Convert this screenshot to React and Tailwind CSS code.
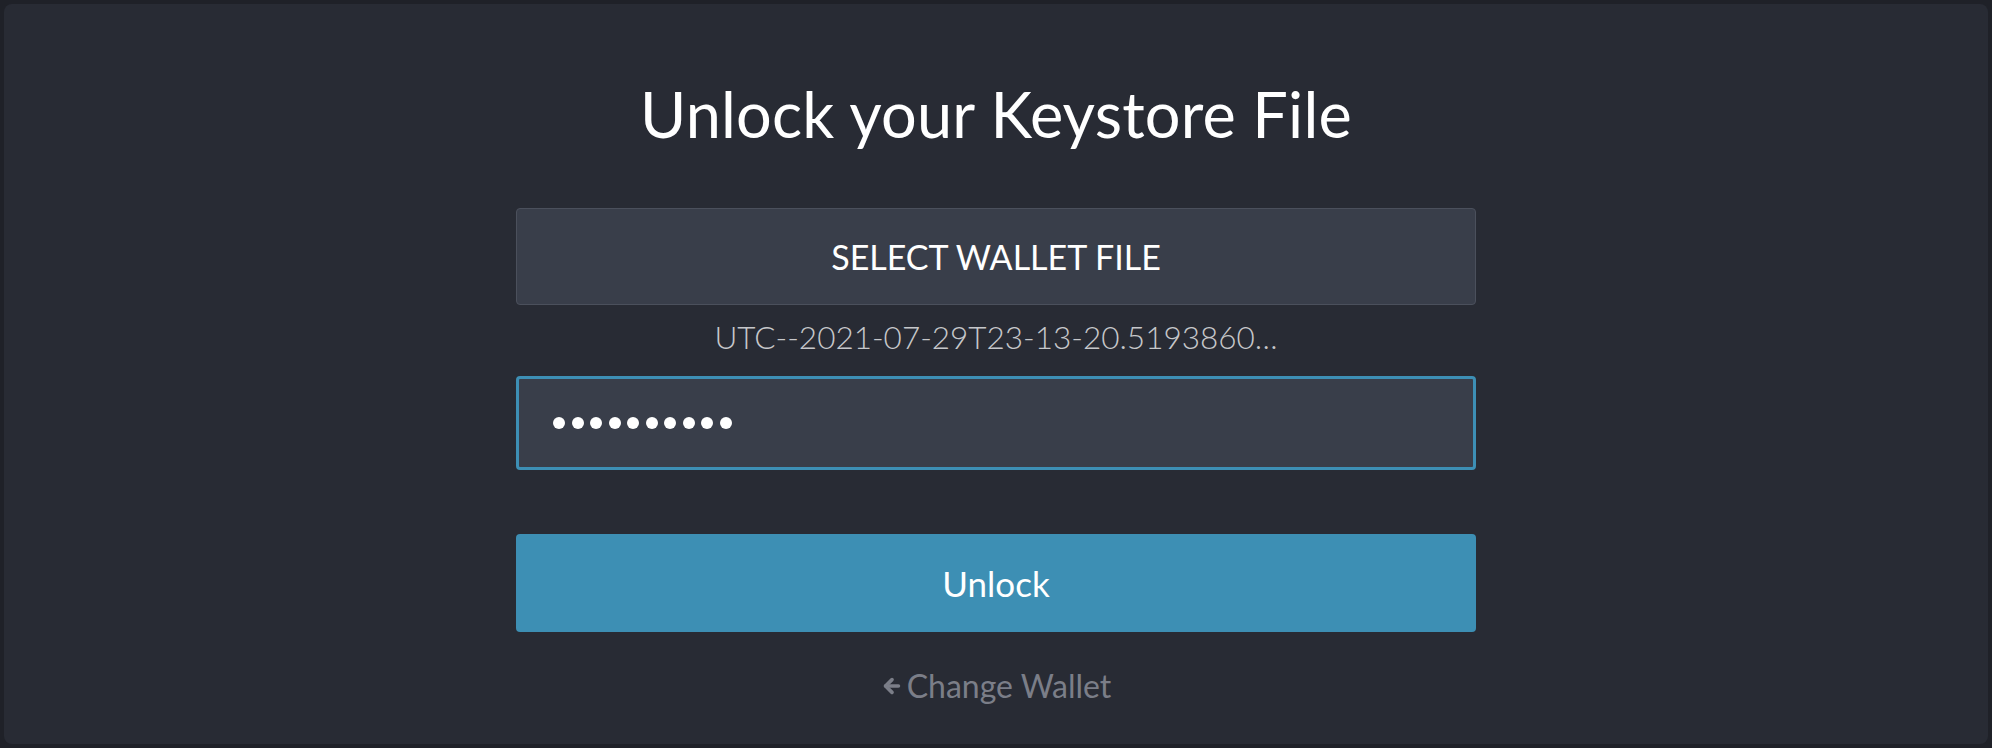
import { ArrowLeft } from "lucide-react";

const font = { fontFamily: "Lato, 'Open Sans', sans-serif" };

export default function App() {
  const dots = Array.from({ length: 10 });

  return (
    <div className="w-full h-[748px] bg-[#1f2128] p-1" style={font}>
      <div className="h-full w-full rounded-lg bg-[#282b34] flex flex-col items-center">
        {/* Title */}
        <h1 className="mt-[78px] text-[63px] leading-none text-white font-normal tracking-[0.2px]">
          Unlock your Keystore File
        </h1>

        {/* Select wallet file */}
        <button className="mt-[63px] w-[960px] h-[97px] rounded-[4px] border border-[#4b505c] bg-[#393e4a] text-white text-[34px] leading-none">
          SELECT WALLET FILE
        </button>

        {/* File name */}
        <p className="mt-[12px] whitespace-nowrap text-[31.5px] leading-[40px] font-light text-[#c6c7ca]">
          UTC--2021-07-29T23-13-20.5193860…
        </p>

        {/* Password field */}
        <div className="mt-[19px] w-[960px] h-[94px] rounded-[4px] border-[3px] border-[#3d8fb5] bg-[#393e4a] flex items-center pl-[34px] gap-[6.5px]">
          {dots.map((_, i) => (
            <span key={i} className="w-[12px] h-[12px] rounded-full bg-white" />
          ))}
        </div>

        {/* Unlock */}
        <button className="mt-[64px] w-[960px] h-[98px] rounded-[4px] bg-[#3d8fb4] text-white text-[35px] leading-none">
          Unlock
        </button>

        {/* Change wallet */}
        <a className="mt-[34px] flex items-center gap-[4px] text-[#7b7e88] text-[32px] leading-[40px]">
          <ArrowLeft className="w-[22px] h-[22px]" strokeWidth={4} />
          Change Wallet
        </a>
      </div>
    </div>
  );
}
